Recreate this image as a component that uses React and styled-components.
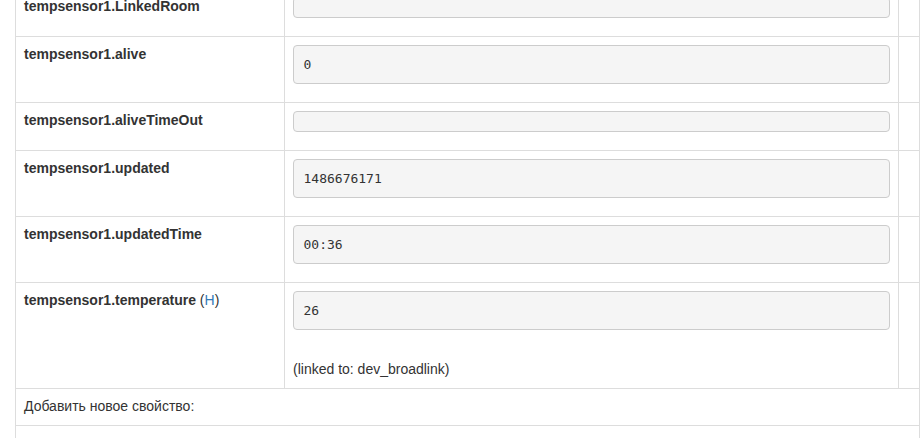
import React from "react";
import styled, { createGlobalStyle } from "styled-components";

const GlobalStyle = createGlobalStyle`
  body {
    margin: 0;
    background: #fff;
    font-family: "Liberation Sans", Arial, Helvetica, sans-serif;
    font-size: 14px;
    line-height: 1.42857;
    color: #333;
  }
`;

const properties = [
  { name: "tempsensor1.LinkedRoom", value: "" },
  { name: "tempsensor1.alive", value: "0" },
  { name: "tempsensor1.aliveTimeOut", value: "" },
  { name: "tempsensor1.updated", value: "1486676171" },
  { name: "tempsensor1.updatedTime", value: "00:36" },
  {
    name: "tempsensor1.temperature",
    value: "26",
    history: true,
    linked: "dev_broadlink"
  }
];

function App() {
  return (
    <>
      <GlobalStyle />
      <StPage>
        <StTable>
          {properties.map((p) => (
            <StRow key={p.name}>
              <StLabelCell>
                {p.name}
                {p.history && (
                  <StHint>
                    {" "}
                    (<StLink href="#">H</StLink>)
                  </StHint>
                )}
              </StLabelCell>
              <StCell>
                <StPre>{p.value}</StPre>
                {p.linked && <StLinked>(linked to: {p.linked})</StLinked>}
              </StCell>
              <StCell />
            </StRow>
          ))}
          <StFullRow>Добавить новое свойство:</StFullRow>
          <StFullRow $tall />
        </StTable>
      </StPage>
    </>
  );
}

export default App;

const StPage = styled.div`
  padding-left: 15px;
  margin-top: -12px;
`;

const StTable = styled.div`
  width: 905px;
  box-sizing: border-box;
  border-left: 1px solid #ddd;
`;

const StRow = styled.div`
  display: grid;
  grid-template-columns: 269px 614px 21px;
  border-top: 1px solid #ddd;
`;

const StCell = styled.div`
  box-sizing: border-box;
  padding: 8px;
  border-right: 1px solid #ddd;
`;

const StLabelCell = styled(StCell)`
  font-weight: bold;
  color: #333;
`;

const StHint = styled.span`
  font-weight: normal;
`;

const StLink = styled.a`
  color: #337ab7;
  text-decoration: none;
`;

const StPre = styled.pre`
  margin: 0 0 10px;
  padding: 9.5px;

  font-family: "DejaVu Sans Mono", Menlo, monospace;
  font-size: 13px;
  line-height: 18px;
  color: #333;

  background-color: #f5f5f5;
  border: 1px solid #ccc;
  border-radius: 4px;
`;

const StLinked = styled.div`
  margin-top: 30px;
`;

const StFullRow = styled.div`
  box-sizing: border-box;
  padding: 8px;
  min-height: ${(p) => (p.$tall ? "60px" : "auto")};
  border-top: 1px solid #ddd;
  border-right: 1px solid #ddd;
`;
